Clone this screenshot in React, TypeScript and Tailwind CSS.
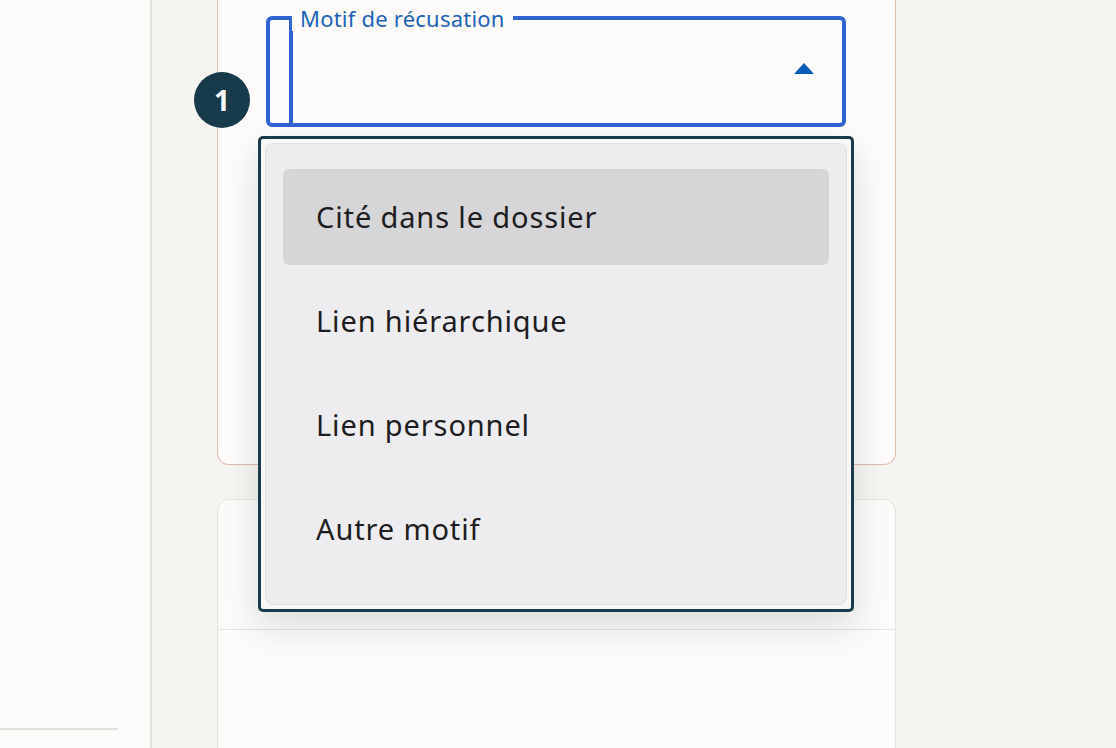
import React from "react";

const items = ["Cité dans le dossier", "Lien hiérarchique", "Lien personnel", "Autre motif"];

export default function App() {
  return (
    <div
      className="flex h-[748px] w-[1116px] overflow-hidden bg-[#f7f5f2]"
      style={{ fontFamily: '"Noto Sans", "Open Sans", sans-serif' }}
    >
      {/* sidebar */}
      <div className="flex h-full w-[152px] shrink-0 flex-col justify-end border-r-2 border-[#e4e2de] bg-[#fcfbf9] pb-[18px]">
        <div className="h-[2px] w-[118px] bg-[#e2e0dc]" />
      </div>

      {/* main */}
      <div className="flex flex-col pl-[65px]">
        {/* card 1 */}
        <div className="h-[465px] w-[679px] shrink-0 rounded-b-xl border-x border-b border-[#e3b9ad] bg-[#fdfcfa] px-[48px] pt-[16px]">
          <div className="relative">
            <div className="flex h-[111px] w-[580px] items-stretch rounded-[6px] border-[4px] border-[#2f63d2] bg-[#fdfcfb]">
              <div className="w-[19px]" />
              <div className="w-[4px] bg-[#2f63d2]" />
              <div className="flex-1" />
              <div className="flex items-center pb-[6px] pr-[28px]">
                <svg width="20" height="11" viewBox="0 0 20 11">
                  <polygon points="10,0 20,11 0,11" fill="#0b5eb8" />
                </svg>
              </div>
            </div>
            <span className="absolute left-[26px] top-[-11px] bg-[#fdfcfb] px-[8px] text-[22px] leading-[26px] tracking-[0.01em] text-[#1b62b4]">
              Motif de récusation
            </span>

            {/* step badge */}
            <div className="absolute left-[-72px] top-[56px] flex h-[56px] w-[56px] items-center justify-center rounded-full bg-[#173b4b] text-[28px] font-bold text-white">
              1
            </div>

            {/* dropdown */}
            <div className="absolute left-[-8px] top-[120px] z-10 h-[476px] w-[596px] rounded-[5px] border-[3px] border-[#173b4b] bg-[#f8f7f5] p-[4px] shadow-[0_14px_36px_rgba(0,0,0,0.13)]">
              <div className="flex h-full flex-col gap-[8px] rounded-[8px] border border-[#e2e0dc] bg-[#edecef] px-[17px] py-[25px]">
                {items.map((t, i) => (
                  <div
                    key={t}
                    className={
                      "flex h-[96px] shrink-0 items-center rounded-[6px] pl-[33px] text-[29px] tracking-[0.03em] text-[#1d1d21] " +
                      (i === 0 ? "bg-[#d6d5d8]" : "")
                    }
                  >
                    {t}
                  </div>
                ))}
              </div>
            </div>
          </div>
        </div>

        {/* card 2 */}
        <div className="mt-[34px] w-[679px] flex-1 rounded-t-xl border-x border-t border-[#e5e3df] bg-[#fcfbf9]">
          <div className="h-[130px] border-b border-[#e5e3df]" />
        </div>
      </div>
    </div>
  );
}
